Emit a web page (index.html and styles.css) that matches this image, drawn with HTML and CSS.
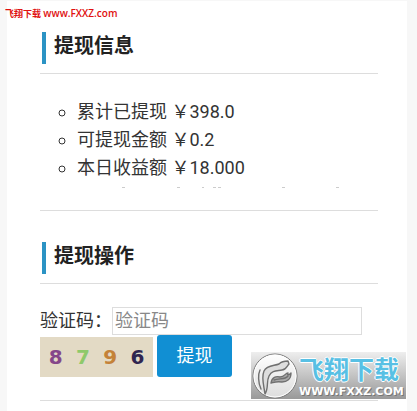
FILE: index.html
```html
<!DOCTYPE html>
<html lang="zh-CN">
<head>
  <meta charset="UTF-8" />
  <meta name="viewport" content="width=device-width, initial-scale=1.0"/>
  <title>提现</title>
  <link rel="stylesheet" href="styles.css">
</head>
<body>
  <div class="site-tag">飞翔下载 <span>www.FXXZ.com</span></div>
  <main class="page">
    <section class="info">
      <h2>提现信息</h2>
      <ul>
        <li>累计已提现 ￥398.0</li>
        <li>可提现金额 ￥0.2</li>
        <li>本日收益额 ￥18.000</li>
      </ul>
      <svg class="cut-row" width="300" height="4" viewBox="0 0 300 4" fill="#ccc" aria-hidden="true">
        <path d="M82 1h3v1h-3zM137 1h3v1h-3zM162 1h2v1h-2zM173 1h3v1h-3zM178 1h3v1h-3zM242 1h3v1h-3zM296 1h3v1h-3z"/>
      </svg>
    </section>
    <section class="action">
      <h2>提现操作</h2>
      <form>
        <div class="row">
          <label for="code">验证码：</label>
          <input type="text" id="code" placeholder="验证码">
        </div>
        <div class="row">
          <div class="captcha">
            <span class="c1">8</span>
            <span class="c2">7</span>
            <span class="c3">9</span>
            <span class="c4">6</span>
          </div>
          <button type="button">提现</button>
        </div>
      </form>
    </section>
  </main>

  <div class="watermark">
    <svg width="48" height="48" viewBox="0 0 48 48" aria-hidden="true">
      <defs>
        <linearGradient id="disc" x1="0" y1="0" x2="0" y2="1">
          <stop offset="0" stop-color="#fff"/>
          <stop offset="1" stop-color="#ddd"/>
        </linearGradient>
      </defs>
      <circle cx="24" cy="24" r="22" fill="url(#disc)" stroke="#777" stroke-width="1"/>
      <circle cx="24" cy="24" r="21" fill="none" stroke="#fff" stroke-width="1"/>
      <g fill="#ddd" stroke="#707070" stroke-width="1.4" stroke-linejoin="round" stroke-linecap="round">
        <path d="M14 42C13 34 10 26 13 19C16 13 23 14 28 12C30 10 32 9 37 9L38 12C36 14 35 18 31 18C26 19 21 18 18 24C15 30 18 36 14 42Z"/>
        <path d="M10 37C7 31 7 22 9 18" fill="none"/>
        <path d="M20 31C21 25 25 24 29 25C34 25 34 21 37 21C36 24 38 23 40 21C40 27 36 30 31 30C26 29 24 30 20 31Z" fill="#aaa"/>
        <path d="M23 28C28 26 34 28 37 24" fill="none"/>
      </g>
    </svg>
    <div class="brand">
      <div class="brand-name">飞翔下载</div>
      <div class="brand-url">WWW.FXXZ.COM</div>
    </div>
  </div>
</body>
</html>
```

FILE: styles.css
```css
* {
  box-sizing: border-box;
}
body {
  margin: 0;
  padding: 1px 10px 0 7px;
  background: #f7f7f7;
  font-family: Roboto, "Noto Sans CJK SC", sans-serif;
  font-size: 18px;
  line-height: 28px;
  color: #333;
}
.page {
  min-height: 100vh;
  padding: 31px 29px 0 33px;
  background: #fff;
}
.site-tag {
  position: absolute;
  left: 5px;
  top: 5px;
  font-family: "Open Sans", "Noto Sans CJK SC", sans-serif;
  font-size: 9px;
  font-weight: 600;
  line-height: 16px;
  color: #e01010;
}
.site-tag span {
  font-size: 10px;
}
section {
  border-bottom: 1px solid #ddd;
}
h2 {
  display: flex;
  margin: 0;
  padding: 0 0 9px 2px;
  border-bottom: 1px solid #ddd;
  font-size: 20px;
  line-height: 28px;
  color: #222;
}
h2::before {
  content: "";
  width: 4px;
  height: 32px;
  margin-right: 8px;
  background: #2b93c4;
}
ul {
  margin: 0;
  padding: 24px 0 0 37px;
  list-style: circle;
}
.cut-row {
  display: block;
  margin: 4px 0 20px;
}
.action {
  padding-top: 31px;
}
form {
  padding: 23px 0;
}
.row {
  display: flex;
  align-items: flex-end;
}
.row input {
  width: 250px;
  height: 28px;
  padding: 0 2px;
  border: 1px solid #ddd;
  background: #fff;
  font: inherit;
  color: #333;
}
.row input::placeholder {
  color: #888;
}
label {
  width: 72px;
  white-space: nowrap;
}
.captcha {
  display: flex;
  justify-content: space-around;
  width: 113px;
  padding: 0 2px;
  margin-right: 4px;
  background: #e3dac5;
  font-family: "DejaVu Sans", sans-serif;
  font-size: 20px;
  font-weight: bold;
  line-height: 40px;
}
.c1 {
  color: #85478a;
}
.c2 {
  color: #8fc96a;
}
.c3 {
  color: #c48238;
}
.c4 {
  color: #302550;
}
button {
  width: 75px;
  height: 42px;
  border: none;
  border-radius: 3px;
  background: #118fd3;
  color: #fff;
  font: inherit;
  cursor: pointer;
}
.watermark {
  position: absolute;
  right: 11px;
  top: 352px;
  display: flex;
  width: 155px;
  height: 47px;
  background: linear-gradient(#eee, #999);
}
.watermark svg {
  flex: none;
}
.brand {
  color: #fff;
  white-space: nowrap;
}
.brand-name {
  padding-top: 5px;
  font-size: 25px;
  font-weight: bold;
  line-height: 28px;
  color: #58c0e4;
  text-shadow: 1px 0 #fff, -1px 0 #fff, 0 1px #fff, 0 -1px #fff;
}
.brand-url {
  font-family: "DejaVu Sans", sans-serif;
  font-size: 11px;
  font-weight: bold;
  line-height: 14px;
  text-shadow: 1px 1px #777;
}
```
